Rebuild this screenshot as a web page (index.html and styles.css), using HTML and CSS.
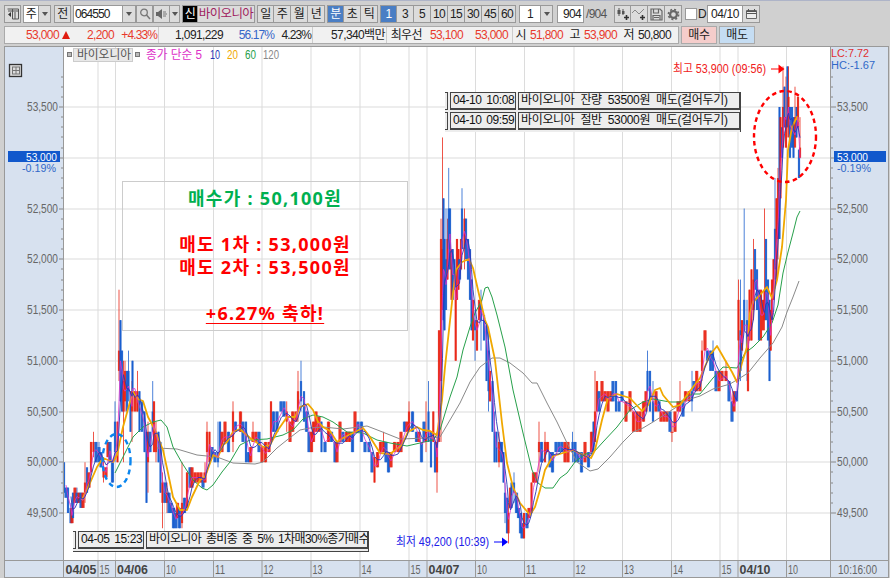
FILE: index.html
```html
<!DOCTYPE html>
<html lang="ko">
<head>
  <meta charset="UTF-8">
  <title>바이오니아 064550 - 분봉 차트</title>
  <link rel="stylesheet" href="styles.css">
</head>
<body>

  <!-- Toolbar -->
  <div class="toolbar">
    <span class="btn w17"><svg width="12" height="12" viewBox="0 0 12 12"><path d="M.5 1h11v10h-6V1M1 3h10M8 4v7" fill="none" stroke="#555"/><path d="M4 4v5L1 6.500z" fill="#333"/></svg></span>
    <span class="group gap2"><b class="btn white w16">주</b><b class="btn w12"><i class="down"></i></b></span>
    <span class="btn w17 gap3">전</span>
    <span class="group gap1"><b class="btn white code">064550</b><b class="btn w12"><i class="down"></i></b></span>
    <span class="btn w17"><svg width="12" height="12" viewBox="0 0 12 12"><circle cx="5" cy="4.500" r="3.300" fill="none" stroke="#777" stroke-width="1.300"/><path d="M7.500 7l3.500 4" stroke="#777" stroke-width="1.500"/></svg></span>
    <span class="group"><b class="btn w17"><svg width="12" height="12" viewBox="0 0 12 12"><path d="M0 4h2l4-3v10L2 8H0z" fill="#666"/><path d="M7 4h3M7 6h4M7 8h3" stroke="#777"/></svg></b><b class="btn w10"><i class="down"></i></b></span>
    <span class="group gap1"><b class="btn new">신</b><b class="btn name">바이오니아</b></span>
    <span class="group gap2"><b class="btn w17">일</b><b class="btn w17">주</b><b class="btn w17">월</b><b class="btn w17">년</b></span>
    <span class="group gap1"><b class="btn w17 on">분</b><b class="btn w17">초</b><b class="btn w17">틱</b></span>
    <span class="group gap1"><b class="btn w17 on">1</b><b class="btn w17">3</b><b class="btn w17">5</b><b class="btn w17">10</b><b class="btn w17">15</b><b class="btn w17">30</b><b class="btn w17">45</b><b class="btn w17">60</b></span>
    <span class="group gap3"><b class="btn white w21">1</b><b class="btn w12"><i class="down"></i></b></span>
    <span class="btn white count">904</span><span class="total">/904</span>
    <span class="group tools">
      <b class="btn w17"><svg width="14" height="13" viewBox="0 0 14 13"><path d="M3 0v8M7 1v6" stroke="#555"/><path d="M1.500 2h3v4h-3zM6 3h2.500v3H6z" fill="#555"/><path d="M10.500 7v5M8 9.500h5" stroke="#333" stroke-width="1.600"/></svg></b>
      <b class="btn w17"><svg width="14" height="13" viewBox="0 0 14 13"><path d="M0 5l3-3 4 4 5-5" fill="none" stroke="#888"/><path d="M10.500 7v5M8 9.500h5" stroke="#333" stroke-width="1.600"/></svg></b>
      <b class="btn w17"><svg width="13" height="13" viewBox="0 0 13 13"><path d="M1 1h9l2 2v9H1zM3.500 1v4h5V1M3 12V7.500h7V12M4 9.500h5" fill="none" stroke="#666" stroke-width="1.200"/></svg></b>
      <b class="btn w17"><svg width="13" height="13" viewBox="0 0 13 13"><circle cx="6.500" cy="6.500" r="3.400" fill="none" stroke="#666" stroke-width="2.200"/><circle cx="6.500" cy="6.500" r="5.100" fill="none" stroke="#666" stroke-width="1.600" stroke-dasharray="2 2"/></svg></b>
    </span>
    <span class="check"></span><span class="d">D</span>
    <span class="group"><b class="btn white date">04/10</b><b class="btn w17"><svg width="11" height="10" viewBox="0 0 11 10"><path d="M.5 1.500h10v8H.5z" fill="#eee" stroke="#666"/><path d="M.5 2.500h10M.5 4.500h10" stroke="#555"/><path d="M2.500 0v2M8.500 0v2" stroke="#555"/></svg></b></span>
  </div>

  <!-- Quote line -->
  <div class="quote">
    <div class="cells">
      <span class="c1 up">53,000</span><i class="tri"></i><span class="c2 up">2,200</span><span class="c3 up">+4.33%</span>
      <span class="c4 bl">1,091,229</span><span class="c5 blue">56.17%</span><span class="c6">4.23%</span>
      <span class="c7 bl">57,340백만</span><span class="c8 bl">최우선</span><span class="c9 up">53,100</span><span class="c10 up">53,000</span>
      <span class="c11 bl">시</span><span class="c12 up">51,800</span><span class="c13">고</span><span class="c12 up">53,900</span><span class="c13">저</span><span class="c12">50,800</span>
    </div>
    <span class="order buy">매수</span>
    <span class="order sell">매도</span>
  </div>

  <!-- Chart -->
  <div class="chart">
    <svg id="chart" width="885" height="532" viewBox="4 46 885 532"></svg>

    <div class="memo">
      <p class="green">매수가 : 50,100원</p>
      <p class="line3">매도 1차 : 53,000원</p>
      <p>매도 2차 : 53,500원</p>
      <p class="line3"><u>+6.27% 축하!</u></p>
    </div>

    <div class="log log-top"><i class="edge"></i><span class="time">04-10 10:08</span><span class="msg">바이오니아 잔량 53500원 매도(걸어두기)</span></div>
    <div class="log log-mid"><i class="edge"></i><span class="time">04-10 09:59</span><span class="msg">바이오니아 절반 53000원 매도(걸어두기)</span></div>
    <div class="log log-low"><i class="edge"></i><span class="time">04-05 15:23</span><span class="msg">바이오니아 총비중 중 5% 1차매30%종가매수</span></div>
  </div>

  <script src="chart.js"></script>
</body>
</html>
```
FILE: styles.css
```css
* { box-sizing: border-box; }
body {
  margin: 0; width: 890px; height: 578px; overflow: hidden;
  background: #d0d0d0; border-top: 1px solid #aeb4c8;
  font: 12px "Liberation Sans", "Noto Sans CJK KR", sans-serif;
  letter-spacing: -1px; color: #222;
}
b, i { font-weight: normal; font-style: normal; }

/* toolbar */
.toolbar { display: flex; align-items: center; height: 24px; padding: 2px 0 0 4px; }
.group { display: flex; }
.btn {
  display: flex; align-items: center; justify-content: center; flex: none;
  height: 18px; border: 1px solid #999; background: #dcdcdc; color: #222;
  line-height: 16px; white-space: nowrap; overflow: hidden; letter-spacing: -.7px;
}
.group .btn + .btn { border-left: 0; }
.btn.white { background: #fff; }
.w10 { width: 10px; }
.w12 { width: 12px; }
.w16 { width: 16px; }
.w17 { width: 17px; }
.w21 { width: 22px; }
.gap1 { margin-left: 2px; }
.gap2 { margin-left: 2px; }
.gap3 { margin-left: 3px; }
.btn.on { background: #4a7ec4; color: #fff; }
.btn.code { width: 50px; justify-content: flex-start; padding-left: 1px; letter-spacing: -.9px; }
.code + .btn { width: 13px; }
.btn.new { width: 16px; background: #000; color: #fff; }
.btn.name { width: 57px; color: #a0235f; letter-spacing: -.6px; font-size: 12.500px; }
.btn.count { width: 27px; margin-left: 4px; justify-content: flex-end; padding-right: 2px; }
.total { width: 26px; padding-left: 2px; color: #555; letter-spacing: -.7px; }
.tools { margin-left: 4px; }
.check { width: 12px; height: 12px; margin-left: 3px; background: #fff; border: 1px solid #999; }
.d { width: 10px; padding-left: 1px; }
.btn.date { width: 36px; letter-spacing: -.4px; }
.down { border: 3.500px solid transparent; border-top: 4px solid #555; border-bottom: 0; }

/* quote line */
.quote { display: flex; align-items: center; height: 20px; padding-left: 4px; }
.cells {
  display: flex; align-items: center; width: 675px; height: 18px;
  background: #f1f1f1; border: 1px solid #aaa; line-height: 16px; letter-spacing: -.6px;
}
.cells span { flex: none; text-align: right; white-space: nowrap; }
.up { color: #e8392b; }
.blue { color: #3565c8; }
.bl { border-left: 1px solid #ccc; }
.tri { flex: none; border: 4.500px solid transparent; border-bottom: 8px solid #e01c10; border-top: 0; margin-left: 3px; }
.c1 { width: 54px; }
.c2 { width: 44px; }
.c3 { width: 43px; letter-spacing: -.9px; }
.c4 { width: 65px; margin-left: 1px; }
.c5 { width: 51px; letter-spacing: -.9px; }
.c6 { width: 37px; letter-spacing: -.9px; }
.c7 { width: 73px; margin-left: 1px; }
.c8 { width: 36px; margin-left: 1px; }
.c9 { width: 41px; }
.c10 { width: 45px; }
.c11 { width: 14px; margin-left: 4px; }
.c12 { width: 37px; }
.c13 { width: 17px; }
.order { width: 36px; height: 18px; margin-left: 2px; border: 1px solid #aaa; line-height: 16px; text-align: center; letter-spacing: -.4px; }
.buy { background: #f5cdcb; }
.sell { background: #c5ddf3; }

/* chart */
.chart { position: relative; margin: 1px 0 0 4px; width: 885px; height: 532px; }
.chart svg { display: block; }
.chart text { letter-spacing: 0; }
.memo {
  position: absolute; left: 118px; top: 135px; width: 286px; height: 150px;
  border: 1px solid #ccc; text-align: center; color: #f00;
  font: bold 18px/23px "Noto Sans", "Noto Sans CJK KR", sans-serif; letter-spacing: 1.300px; padding-top: 5px;
}
.memo p { margin: 0; }
.memo .green { color: #00b050; }
.memo .line3 { margin-top: 23px; }
.memo u { text-decoration-thickness: 1px; text-underline-offset: 3px; }
.log {
  position: absolute; display: flex; gap: 2px; background: #ededed;
  font: 12px/15px "Liberation Sans", "Noto Sans CJK KR", sans-serif; color: #111;
}
.log span { border: 1px solid #444; border-bottom-width: 2px; height: 18px; padding-left: 2px; white-space: nowrap; overflow: hidden; }
.edge { width: 3px; height: 18px; border: 1px solid #444; border-left: 0; }
.time { width: 66px; letter-spacing: -.45px; word-spacing: 2px; }
.log-top { left: 441px; top: 46px; width: 296px; height: 20px; border-right: 1px solid #444; }
.log-mid { left: 441px; top: 66px; width: 296px; height: 20px; border-right: 1px solid #444; }
.log-top .msg, .log-mid .msg { width: 222px; letter-spacing: -.35px; word-spacing: 3px; }
.log-low { left: 69px; top: 485px; width: 296px; height: 21px; border-right: 1px solid #444; border-bottom: 1px solid #444; }
.log-low .msg { width: 222px; letter-spacing: -.6px; word-spacing: 2px; }
```
FILE: chart.js
```js
// x, high, low, [body high, body low] -- prices in 100 won, r = up, b = down
const candles = `
b64 500 497;b66 497.5 496.5;b68 497.5 495;b71 496 494 495.5 494;r72 495.5 494;b73 497 494.5;r75 497.5 496;b77 497.5 496 497 496;r79 497 496;
b81 497 495.5;r83 497 495.5;r85 500 496 498 497;b87 499.5 497;r89 499 497.5;r91 502 499;r93.500 503 500.5 502 501;b96 502 500;b99 502 500 501.5 500;
b101 501 499.5;r103.500 500.5 498 499.5 498.5;r106 499.5 498.5;r108 502 500.5;b110 502 500;b112.500 500 498;b115 506 500 504 501;r117.500 504 500;
r119 517 508 511 509;b120.500 514 506;b122 511 505;r123.500 510 500 508 505;r125 510 505 509 506;b127 509 505;b128.500 511 506 509 507;b130.500 507 503;
r132 508 502 507 505;b132.500 510 507;r135 507 505;r137.500 509 505 507 505;b139.500 507 503;b142 506 503;b144.500 505 501;b146.500 503 496;r148 504 497 503 500;
b150 503 501;b152.700 508 503 505 503;r154 506 501;r156 504 500 503 501;b158.500 503 500;b160.500 502 497;r162.500 499 493.5 498 496;b165 498 496;r167 498 495 497 496;
b169 497 495;b171 496 495;b173.500 495.5 493.5;b176 495 493.5;r177.500 496 494.5;b179.500 495.5 493.5;r182 500 493.5 496 494;b184.500 496.5 495;r187 499 495.5;
b190 499.5 497.5;r192 499.5 497.5;r195 499 498;r198 499 498;r201 499 498;b203 498.5 497.5;r205 500 498 499 498;r207 504 499 503 501;r209.500 503 500;b212 501.5 500.5;
b215 501 500;b218 504 499.5 501 500;b220 504 501;r222 503 501;r225 504 502;b228.500 503 501;r233 506 501 505 502;b235.500 504 503;r240.500 505 503;b243 504 502;
b246 504 500;b248.500 501 500;r250.700 501.5 500;r253 504 502 503 502;r256 503 502;b259 503 501;r262 501.5 500;r265.500 502 500;r269 502 501;r271 506 502;b273.500 505 503;
b277 505 503;b281 506 505;b284 506 504.5;r286.700 506 503 505 504;r290 504 502;r292.700 505 503;r296 505 504;r298 509 504 507 505;b301 510 505 508 506;b304 507 504;
b306.500 505 503;b309 503 501;r311.500 503 501;r313.500 504 502;r316 505 503;r319 504.5 503;b321.500 504 501;b325 502 501;r328.500 504 502;b331.500 503 502;
b335 502 500;r337 502 500;r340 504 502;b343 503 502;r346.500 503 502;r349.500 503 502;b352.500 503 501;r355 505 503;b358 504 503;b361.500 504 502;b365 502 501;
b369 502 501;b372 501 499;r374.500 500.5 498;r377.500 501 499.5;r380.500 502 501;r383.500 503 501 502 501;b386 502 500;b388.500 501 499;r391 501 499.5;r394.500 502 501;
r398 502 501;r401 503 501;b404.500 504 503;r407 504 503;r409 506 503 505 503;b412.500 505 503;b416.500 503 502;r419 503 502;b421.500 502 500;b424 504 502;
r426 506 501 503 502;b428.500 508 502 505 502;b431 503 499.5;r433.300 505 502;b435 502 499;r437 503 497 502 499;r439 513 502;r441 524 502 522 508;
r442.500 532 515 521 515;b443.500 526 514;b444.500 522 513;b446 525 515 520 515;r447.500 524 518 522 518;b448.700 529 519 525 521;b450 525 519;r451.500 521 516;
b452.700 521 516;b454.500 520 517;r455.700 517 510;r457 522 516;r458.500 521 517;b459.500 520 518;r461 522 519;b462 527 521 525 521;r464.500 525 519 524 521;b466 524 520;
b468 522 518;b470 521 516;b471.500 518 513;r473 516 512;b475 515 510 514 513;r477 514 511;r479.500 516 514;b481 517 511 516 514;b484 514.5 512;b486.500 513.5 508;
b488.500 513 505 511 507;r490 509 506;b492.500 508 503;b494.500 505 500 503 500;b496.500 503 500;r499 503 499.5 502 500;b501.500 502 500;b503.500 501 498;
b505 498 494 497 495;b507 496.5 493;r508.500 496 492 495 493;r510.500 497.5 495.5;b511.500 498 495.5;b514 499 496 498 497;b516.500 497 495;b518.500 495.5 494.5;
b520.500 495 493;b522 494 492.5;r524 495 492.5;b527 495 493.5;r529 495.5 494.5;r531.500 498 495;r533.500 499 498;r536 499 498;r539 504 499 502 501;b541.500 502 500;
r545 503 500 502 500;r547.500 502 501;b550 501 499.5;b552.500 501 499;b556 502 501;b559 502 501;b562 502 501;r565 502 500;r568 502 500;b572.500 503 500 502 501;
b575 502 500;b578 501 500;b581.500 501 499;r585 502 500;b588.500 501 499.5;r591.500 503 501;b593.500 504 501;r595 509 502 505 502;r597 508 505;b599 507 505;
r602 508 506;r605 507 506;r608 507 505;r611 507 506;b613 508 506;b616 508 505;b619 506 505;b622 507 506;r626 506 504;r630 507 505;r633.500 505 503;r637 505 503;
r640 505 503;r643.500 506 504;r646 507 505;b647.500 511 507 509 507;b650 509 505;b653 508 504 506 504;r656 507 505;b659 506 505;r661 505 504;r664 505 504;r667 505 504;
b670 505 503;r672 504 502 503 503;r675 505 503;r678 506 505;r680 508 505 506 505;b683 506 504.5;r685.500 507 506;r689 507 506;b692 509 505 507 506;b694 508 507;
r696.700 509 507;r700 508 507;r702 512 508 511 509;r705 513 511;b707.500 511 510;b710.700 511 509;b713 512 509 511 509;b716 509 507;r719 509 507;r722 509 508;
r726 510 508 509 508;b729 508 506;b732 506 504;r734 507 505;b736.500 507 506;r738.500 518 508 516 512;b740.500 518 508 513 509;r742 514 511;b744.200 525 513 516 513;
b747 516 508 514 511;r748 513 507;r749.500 517 512;r751.500 519 512;r753.500 522 514 518 515;b755 521 517;b757 519 515;b759 517 512;r761 517 512;r763 516 513;
r764.500 525 513 517 514;b766 522 514;b768 518 512;b769.500 516 508;r770.700 515 511;r772 518 514;r773.500 520 516;b775 528 518 523 519;r776.500 526 518;
r778 529 520 528 522;b779.500 535 522;r780.500 534 526;b782 533 530;r783 539 532 535 531;b784.500 537 533;r786 538 531 534 531;b787.500 539 533;r788.500 539 534 536 532;
b790 535 530;b792 535 531;b793.500 534 530;r795 537 532 534 531;b796.500 535 532;r798 536 533;b799 530.8 528;r800 534 530 531 530`;

const ma20 = '82,500 90,483 97,467 103,458 113,462 117,455 123,427 130,402 133,392 138,399 143,401 148,417 155,430 163,450 168,473 173,497 180,510 187,510 192,497 200,480 205,477 213,455 218,457 223,445 227,442 233,432 240,429 250,438 263,447 270,445 278,430 287,417 295,417 300,407 308,404 313,410 318,422 323,427 330,431 337,442 343,438 353,433 363,428 370,437 380,453 390,454 402,445 408,432 417,427 423,430 430,431 437,435 442,400 445,367 449,330 453,293 456,270 462,262 469,259 473,268 478,290 485,320 488,327 495,360 502,423 507,463 513,487 520,503 530,515 535,507 540,490 545,470 553,456 563,453 573,450 583,455 591,458 595,450 602,420 608,398 617,394 630,398 642,411 648,405 655,390 660,388 663,395 673,407 680,405 687,395 700,378 710,355 717,346 725,360 732,372 737,382 742,363 747,347 750,313 753,302 760,295 767,287 772,298 777,280 782,247 786,200 788,150 792,127 797,117 799,122';
const ma60 = '115,473 123,457 133,437 143,427 153,422 161,420 167,427 173,447 182,463 193,480 202,488 207,490 213,485 222,472 230,462 240,445 250,440 267,439 283,435 293,430 303,419 313,415 323,417 333,422 347,432 363,433 377,440 390,443 407,446 420,443 433,440 440,430 450,397 457,377 463,350 470,327 475,313 482,300 485,288 488,287 492,297 497,315 505,347 513,390 523,433 532,470 538,483 545,488 553,488 560,478 567,473 575,462 585,454 593,453 603,442 617,427 630,410 643,402 653,399 670,402 680,402 692,394 700,394 713,378 723,367 737,368 745,353 753,347 763,337 772,323 778,305 783,273 788,252 793,233 797,217 800,211';
const ma120 = '157,448 177,449 197,455 217,457 233,463 255,464 263,462 277,448 287,440 300,430 310,428 323,427 343,429 367,426 380,431 400,439 427,438 440,437 450,420 460,403 470,382 480,367 492,358 500,358 510,363 523,373 532,383 537,383 547,403 557,422 567,443 577,462 590,471 598,469 610,457 623,442 633,432 643,428 653,422 675,408 687,400 700,396 713,389 730,384 740,378 748,373 760,358 773,343 782,327 787,312 793,297 799,281';

const yOf = p => 107 + (535 - p) * 10.15;
const out = [];
const rect = (x, y, w, h, fill, more = '') => out.push(`<rect x="${x}" y="${y}" width="${w}" height="${h}" fill="${fill}" ${more}/>`);
const text = (x, y, s, fill, len, more = '', size = 12) => out.push(`<text x="${x}" y="${y}" fill="${fill}" textLength="${len}" lengthAdjust="spacingAndGlyphs" font-size="${size}" ${more}>${s}</text>`);

// panels
rect(4, 46, 885, 532, '#d7e1ef');
rect(64, 47, 766, 513, '#fff');

// grid
const times = [[98, '15'], [115.5, '04/06'], [164.5, '10'], [213.5, '11'], [262, '12'], [311, '13'], [360, '14'], [409, '15'], [427, '04/07'],
  [475.5, '10'], [524.5, '11'], [574, '12'], [622.5, '13'], [671.5, '14'], [720, '15'], [738, '04/10'], [786.5, '10']];
times.forEach(([x]) => rect(x - .5, 47, 1, 513, '#dcdcdc'));
for (let p = 495; p <= 535; p += 5) rect(64, Math.round(yOf(p)) - .5, 766, 1, '#dcdcdc');

// candles
const mids = [];
candles.split(';').forEach(row => {
  const c = row.trim();
  const col = c[0] === 'r' ? '#e81c0c' : '#1158cc';
  const [x, hi, lo, bh, bl] = c.slice(1).split(' ').map(Number);
  const top = bh || hi, bot = bl || lo;
  // quiet stretches have wider, touching bodies
  const w = hi - lo < 2.5 ? 3.2 : 2.2;
  rect(x - .5, yOf(hi), 1, yOf(lo) - yOf(hi), col, 'opacity=".75"');
  rect(x - w / 2, yOf(top), w, Math.max(yOf(bot) - yOf(top), 1), col, 'opacity=".85"');
  mids.push([x, (yOf(top) + yOf(bot)) / 2]);
});

// short averages come from the candle bodies, long ones are stored
function average(n) {
  return mids.slice(n - 1).map((m, i) => {
    const part = mids.slice(i, i + n);
    return `${m[0]},${(part.reduce((s, v) => s + v[1], 0) / n).toFixed(1)}`;
  }).join(' ');
}
const line = (pts, col, w) => out.push(`<polyline points="${pts}" fill="none" stroke="${col}" stroke-width="${w}" stroke-linejoin="round"/>`);
line(ma120, '#8a8a8a', 1);
line(ma60, '#27a04b', 1);
line(ma20, '#f0a800', 1.8);
line(average(2), '#dd2fc8', .8);
line(average(4), '#2738b8', .9);

// price axes
rect(63, 47, 1, 531, '#999');
rect(830, 47, 1, 531, '#999');
rect(4, 46, 884, 1, '#999');
rect(4, 46, 1, 532, '#999');
rect(888, 46, 1, 532, '#999');
for (let p = 495; p <= 538; p++) {
  const y = Math.round(yOf(p)) - .5, long = p % 5 === 0;
  rect(long ? 59 : 61, y, long ? 4 : 2, 1, '#888');
  rect(831, y, long ? 5 : 2, 1, '#888');
  if (long && p !== 530) {
    const s = `${Math.floor(p / 10)},${p % 10}00`;
    text(27, y + 4, s, '#666', 31);
    text(837, y + 4, s, '#666', 31);
  }
}
rect(8, 151, 52, 11, '#1158cc');
rect(834, 151, 52, 11, '#1158cc');
text(26, 160.5, '53,000', '#fff', 31, '', 11);
text(837, 160.5, '53,000', '#fff', 31, '', 11);
text(22, 171.5, '-0.19%', '#3068c8', 34, '', 10);
text(837, 171.5, '-0.19%', '#3068c8', 34, '', 10);
text(831, 57, 'LC:7.72', '#e03030', 38, '', 10.5);
text(831, 68.5, 'HC:-1.67', '#3068c8', 44, '', 10);
out.push('<g fill="none" stroke="#333"><rect x="9.500" y="64.500" width="12" height="12" fill="#ddd" stroke-width="1.300"/><path d="M12 67h8M12 70.500h8M12 74h8M12.500 67v7M16 67v7M19.500 67v7" stroke="#777"/></g>');

// time axis
rect(4, 560, 884, 1, '#999');
times.forEach(([x, s]) => {
  rect(x - .5, 561, 1, 16, '#999');
  const day = s.length > 2;
  text(x + 1.5, 573.5, s, day ? '#444' : '#666', day ? 31 : 10, day ? 'font-weight="bold"' : '');
});
text(65.5, 573.5, '04/05', '#444', 31, 'font-weight="bold"');
text(838, 573.5, '10:16:00', '#666', 39);
rect(4, 577, 884, 1, '#999');

// legend
rect(67.5, 52.5, 4, 4, '#bbb', 'stroke="#777"');
rect(73.5, 48.5, 59, 13, '#e8e8e8', 'stroke="#ccc"');
rect(135.5, 52.5, 4, 4, '#bbb', 'stroke="#777"');
text(77, 59, '바이오니아', '#555', 54);
text(146, 59, '종가 단순 5', '#dd2fc8', 56);
text(210, 59, '10', '#2738b8', 10);
text(227, 59, '20', '#f0a800', 11);
text(245, 59, '60', '#27a04b', 11);
text(263, 59, '120', '#888', 16);

// high and low marks
text(673, 72.5, '최고 53,900 (09:56)', '#f02020', 93);
out.push('<path d="M771 69h8" stroke="#f00"/><path d="M778.500 64.500l6 4.500l-6 4.500z" fill="#f00"/>');
text(396, 545.5, '최저 49,200 (10:39)', '#2020e8', 93);
out.push('<path d="M494 542h8" stroke="#00f"/><path d="M502 537.500l6 4.500l-6 4.500z" fill="#00f"/>');

// hand drawn marks
out.push('<ellipse cx="116.500" cy="460.500" rx="14" ry="26.500" fill="none" stroke="#0b86ef" stroke-width="2.400" stroke-dasharray="5 4"/>');
out.push('<ellipse cx="785" cy="136.500" rx="31" ry="45.500" fill="none" stroke="#f00" stroke-width="2.400" stroke-dasharray="4.500 3.500"/>');

document.getElementById('chart').innerHTML = out.join('');
```
